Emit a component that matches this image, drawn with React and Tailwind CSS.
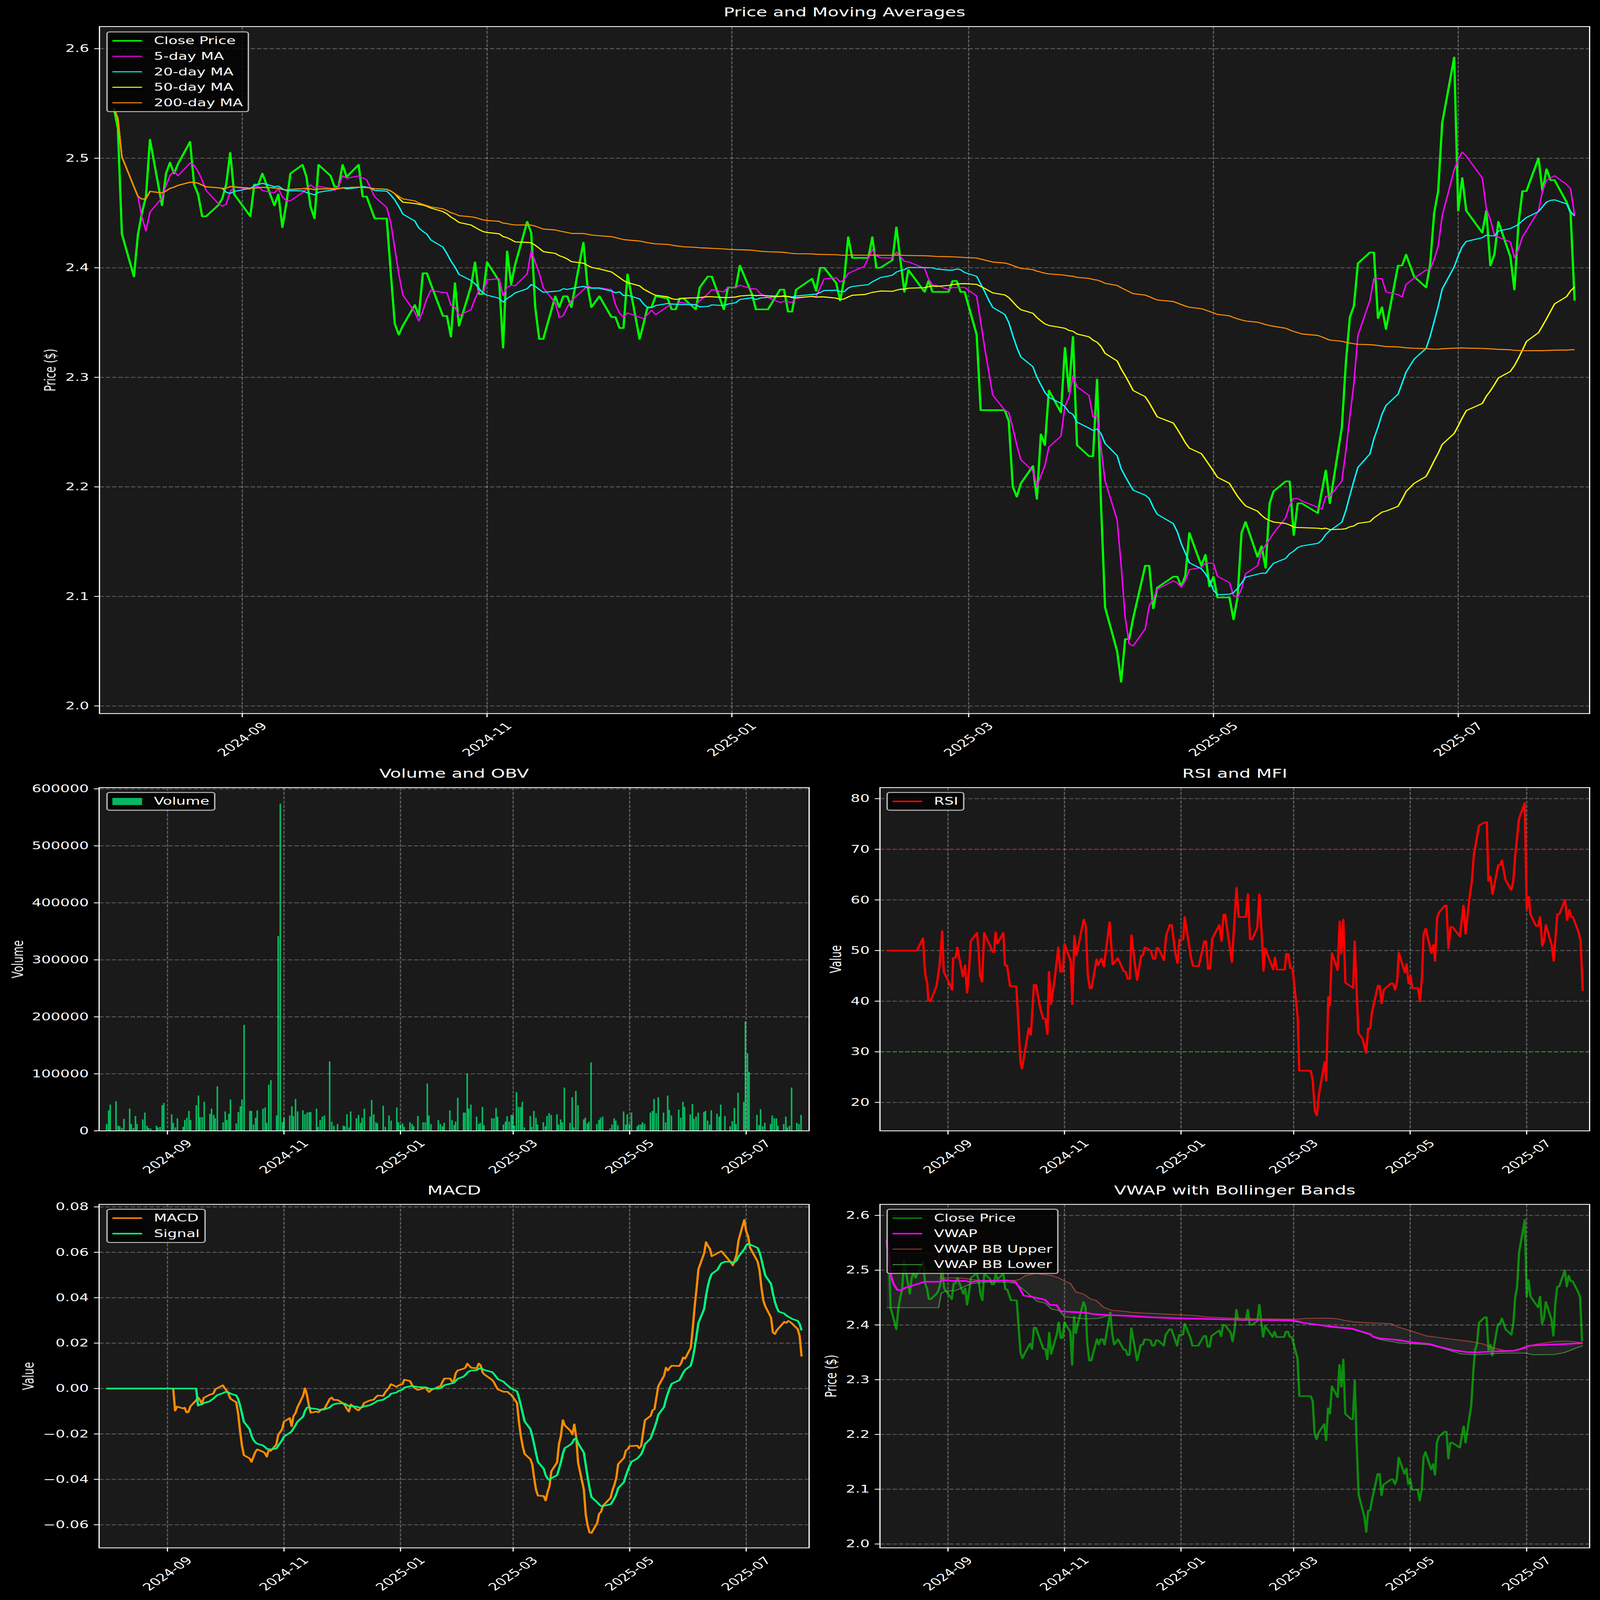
import React from 'react';

// closing prices, one per weekday from 2024-07-31 to 2025-07-30
const weekdayClose = [
  2.546, 2.527, 2.431,
  2.392, 2.43, 2.45, 2.465, 2.517,
  2.457, 2.486, 2.496, 2.486, 2.495,
  2.515, 2.476, 2.467, 2.447, 2.447,
  2.457, 2.463, 2.476, 2.505, 2.467,
  2.457, 2.447, 2.476, 2.476, 2.486,
  2.457, 2.467, 2.437, 2.459, 2.486,
  2.494, 2.483, 2.456, 2.445, 2.494,
  2.484, 2.474, 2.474, 2.494, 2.483,
  2.494, 2.465, 2.465, 2.455, 2.445,
  2.445, 2.396, 2.349, 2.339, 2.347,
  2.366, 2.356, 2.395, 2.395, 2.385,
  2.356, 2.356, 2.337, 2.386, 2.347,
  2.383, 2.405, 2.376, 2.376, 2.405,
  2.388, 2.327, 2.415, 2.385, 2.403,
  2.442, 2.432, 2.364, 2.335, 2.335,
  2.374, 2.364, 2.374, 2.374, 2.364,
  2.423, 2.384, 2.364, 2.369, 2.374,
  2.355, 2.355, 2.345, 2.345, 2.394,
  2.335, 2.349, 2.364, 2.364, 2.374,
  2.372, 2.362, 2.362, 2.372, 2.372,
  2.362, 2.382, 2.387, 2.392, 2.392,
  2.362, 2.382, 2.382, 2.382, 2.402,
  2.376, 2.362, 2.362, 2.362, 2.362,
  2.38, 2.38, 2.36, 2.36, 2.38,
  2.387, 2.39, 2.379, 2.4, 2.4,
  2.386, 2.37, 2.39, 2.428, 2.409,
  2.409, 2.409, 2.428, 2.4, 2.4,
  2.407, 2.437, 2.407, 2.378, 2.398,
  2.382, 2.378, 2.388, 2.378, 2.378,
  2.378, 2.388, 2.388, 2.378, 2.378,
  2.339, 2.27, 2.27, 2.27, 2.27,
  2.27, 2.26, 2.2, 2.191, 2.203,
  2.219, 2.189, 2.248, 2.238, 2.288,
  2.268, 2.327, 2.287, 2.337, 2.238,
  2.228, 2.228, 2.298, 2.183, 2.09,
  2.05, 2.022, 2.061, 2.061, 2.08,
  2.128, 2.128, 2.089, 2.108, 2.111,
  2.118, 2.118, 2.109, 2.119, 2.158,
  2.128, 2.138, 2.109, 2.118, 2.099,
  2.099, 2.079, 2.099, 2.158, 2.168,
  2.136, 2.146, 2.126, 2.185, 2.196,
  2.205, 2.205, 2.156, 2.185, 2.185,
  2.178, 2.176, 2.196, 2.215, 2.185,
  2.254, 2.313, 2.355, 2.365, 2.404,
  2.414, 2.414, 2.354, 2.364, 2.344,
  2.402, 2.402, 2.412, 2.397, 2.392,
  2.382, 2.403, 2.45, 2.47, 2.532,
  2.592, 2.452, 2.482, 2.452, 2.446,
  2.432, 2.452, 2.402, 2.412, 2.442,
  2.41, 2.38, 2.44, 2.47, 2.47,
  2.5, 2.47, 2.49, 2.48, 2.48,
  2.46, 2.45, 2.37,
];

// market holidays, as days relative to 2024-09-01
const holidays = [1, 88, 115, 122, 130, 141, 169, 229, 267, 291, 306];

// days relative to 2024-09-01, weekends and holidays skipped
const days = [];
const close = [];
let dayCursor = -32;
weekdayClose.forEach((price) => {
  // 2024-09-01 was a Sunday
  while ((dayCursor + 35) % 7 === 0 || (dayCursor + 35) % 7 === 6) dayCursor++;
  if (!holidays.includes(dayCursor)) {
    days.push(dayCursor);
    close.push(price);
  }
  dayCursor++;
});

const rolling = (values, size) =>
  values.map((_, i) => {
    if (i < size - 1) return null;
    const slice = values.slice(i - size + 1, i + 1);
    return slice.reduce((a, b) => a + b, 0) / size;
  });

// first `size` values grow with the data, the window is full after that
const expanding = (values, size) =>
  values.map((_, i) => {
    const slice = values.slice(Math.max(0, i - size + 1), i + 1);
    return slice.reduce((a, b) => a + b, 0) / slice.length;
  });

const ema = (values, span, minPeriods) => {
  const k = 2 / (span + 1);
  let prev = null;
  let seen = 0;
  return values.map((v) => {
    if (v === null) return null;
    prev = prev === null ? v : v * k + prev * (1 - k);
    seen++;
    return seen >= minPeriods ? prev : null;
  });
};

const ema12 = ema(close, 12, 26);
const ema26 = ema(close, 26, 26);
const macdRaw = close.map((_, i) => (ema26[i] === null ? null : ema12[i] - ema26[i]));
const signalRaw = ema(macdRaw, 9, 9);
const macd = macdRaw.map((v) => v ?? 0);
const signal = signalRaw.map((v) => v ?? 0);

const line = (values, toX, toY) =>
  values
    .map((v, i) => (v === null ? null : `${toX(days[i]).toFixed(1)},${toY(v).toFixed(1)}`))
    .filter(Boolean)
    .join(' ');

// RSI vertices, read off the plot in a 1.448 x 1.467 grid
const rsi = [
  [192,931],[250,931],[262,897],[265,975],[267,1005],[270,1020],[272,1068],[276,1072],[288,1030],[294,970],[299,877],[302,990],[312,1020],[318,1040],[320,952],[325,950],[328,922],[333,960],[339,1003],[343,972],[347,1048],[351,980],[354,905],[366,882],[369,925],[372,1000],[376,1018],[380,882],[392,920],[396,935],[399,935],[402,880],[405,912],[417,882],[420,972],[424,972],[430,1030],[442,1030],[446,1130],[450,1240],[453,1258],[458,1215],[466,1146],[470,1165],[476,1026],[480,1026],[488,1090],[494,1120],[498,1120],[502,1163],[505,990],[509,1080],[516,1010],[523,922],[527,990],[532,990],[535,912],[547,960],[550,1080],[554,890],[558,945],[572,845],[576,862],[580,1000],[584,1036],[587,1036],[597,955],[600,972],[606,953],[611,975],[622,852],[628,970],[638,952],[649,988],[653,990],[657,1010],[661,1010],[664,888],[670,960],[675,1013],[683,945],[686,945],[690,922],[701,930],[706,954],[710,954],[713,924],[716,924],[727,958],[731,890],[738,860],[742,860],[749,940],[753,966],[757,900],[764,900],[767,838],[779,950],[783,974],[794,974],[805,905],[808,905],[812,982],[816,982],[820,898],[834,860],[838,905],[842,831],[845,831],[858,963],[867,757],[871,838],[885,838],[889,775],[893,900],[897,900],[907,868],[911,775],[916,900],[919,988],[922,925],[938,984],[941,950],[945,984],[960,984],[963,940],[967,940],[971,980],[975,980],[985,1115],[988,1264],[1010,1264],[1014,1290],[1018,1375],[1022,1388],[1026,1330],[1037,1240],[1040,1292],[1044,1060],[1047,1083],[1051,938],[1062,985],[1066,850],[1069,940],[1073,845],[1077,1020],[1092,1035],[1095,905],[1102,1160],[1110,1175],[1117,1215],[1121,1147],[1125,1147],[1128,1105],[1140,1028],[1143,1028],[1147,1078],[1151,1040],[1165,1022],[1169,1022],[1173,1040],[1177,1015],[1180,937],[1192,992],[1195,968],[1199,1022],[1203,1000],[1206,1035],[1217,1035],[1221,1072],[1225,1000],[1228,885],[1232,870],[1243,938],[1247,915],[1250,960],[1254,840],[1258,825],[1269,806],[1272,806],[1276,925],[1280,866],[1284,866],[1298,892],[1305,806],[1309,885],[1316,790],[1321,740],[1325,665],[1330,625],[1335,584],[1347,575],[1350,575],[1353,738],[1357,725],[1361,775],[1365,745],[1372,694],[1376,694],[1379,681],[1386,735],[1397,763],[1401,740],[1405,665],[1412,567],[1423,522],[1427,818],[1431,782],[1434,830],[1445,863],[1449,863],[1453,838],[1457,918],[1460,905],[1464,860],[1475,915],[1479,960],[1486,830],[1490,830],[1501,790],[1505,847],[1509,818],[1513,838],[1516,838],[1527,880],[1531,905],[1535,1043],
];

// VWAP and its bands, read off the plot in a 1.448 x 1.1205 grid
const vwap = [
  [192,260],[200,390],[205,420],[212,442],[220,444],[226,436],[240,428],[265,413],[295,413],[300,406],[318,410],[345,410],[352,414],[372,410],[425,408],[440,413],[447,432],[456,463],[470,467],[497,478],[507,497],[520,498],[527,520],[545,522],[575,525],[590,530],[620,534],[660,537],[700,542],[760,546],[810,548],[880,551],[970,553],[985,556],[995,562],[1020,568],[1050,576],[1090,583],[1105,592],[1125,603],[1130,612],[1145,619],[1165,622],[1185,626],[1205,633],[1240,639],[1260,650],[1285,661],[1310,668],[1330,669],[1360,666],[1400,664],[1420,655],[1432,645],[1450,643],[1500,639],[1535,636],
];
const bbUpper = [
  [192,308],[292,308],[297,400],[310,398],[340,400],[370,408],[440,408],[450,403],[460,390],[480,383],[510,390],[525,400],[535,410],[547,420],[557,450],[572,458],[585,475],[597,482],[610,505],[625,516],[650,520],[665,524],[690,527],[730,530],[790,536],[810,541],[850,544],[900,547],[980,549],[1000,546],[1040,545],[1060,547],[1075,553],[1095,559],[1125,562],[1165,565],[1180,578],[1205,592],[1232,609],[1260,616],[1285,622],[1320,630],[1345,640],[1362,653],[1385,663],[1405,662],[1425,648],[1445,640],[1480,630],[1505,628],[1535,634],
];
const bbLower = [
  [192,507],[292,507],[297,455],[305,447],[325,445],[340,432],[355,420],[380,415],[420,414],[440,418],[460,448],[482,484],[497,490],[510,512],[525,518],[535,540],[575,548],[600,546],[620,535],[660,537],[700,542],[760,547],[810,549],[880,552],[970,554],[995,563],[1025,570],[1050,578],[1090,585],[1105,594],[1125,606],[1130,614],[1145,623],[1180,635],[1240,642],[1260,652],[1285,666],[1300,675],[1330,678],[1380,672],[1425,672],[1440,678],[1480,677],[1500,670],[1520,655],[1535,645],
];

const rsiX = (zx) => zx * 1.448 - 259;
const vwapPoints = (pts) => pts.map(([x, y]) => `${rsiX(x).toFixed(1)},${(y * 1.1205 - 148).toFixed(1)}`);

// [position, volume in thousands]
const volumeBars = [
  [203,12],[207,36],[210,46],[221,52],[225,9],[228,8],[232,5],[236,21],[247,39],[250,12],[254,5],[258,26],[261,12],[272,20],[276,32],[280,9],[283,5],[287,4],[298,9],[301,6],[305,7],[309,45],[312,49],[327,29],[330,14],[334,6],[338,22],[349,7],[352,19],[356,23],[360,35],[363,19],[374,45],[378,62],[381,24],[385,24],[389,51],[400,30],[403,39],[407,28],[410,22],[414,78],[425,15],[429,34],[432,19],[436,30],[439,55],[450,13],[454,33],[458,43],[461,55],[465,186],[476,35],[479,35],[483,11],[487,23],[490,36],[501,39],[505,41],[508,14],[512,81],[516,89],[527,27],[530,342],[534,574],[538,15],[541,23],[552,27],[556,43],[559,26],[563,56],[567,34],[577,36],[581,29],[585,32],[589,33],[592,33],[603,39],[606,7],[610,19],[614,25],[618,27],[628,122],[632,16],[636,9],[643,12],[654,9],[657,8],[661,29],[665,6],[668,34],[679,22],[683,28],[687,14],[690,23],[694,39],[705,25],[708,54],[712,29],[716,15],[719,13],[730,44],[734,7],[741,27],[745,18],[756,41],[759,15],[763,11],[767,13],[770,7],[781,15],[785,12],[788,8],[796,26],[806,15],[810,15],[814,83],[817,27],[821,12],[835,19],[839,12],[843,8],[846,14],[857,36],[861,19],[865,10],[868,16],[872,58],[883,32],[886,32],[890,100],[893,39],[897,46],[908,25],[912,12],[915,14],[919,42],[922,10],[937,22],[941,22],[945,40],[948,25],[959,11],[963,16],[966,26],[970,16],[974,28],[977,28],[980,9],[984,68],[988,42],[992,42],[995,51],[999,6],[1010,26],[1013,7],[1017,35],[1021,23],[1024,11],[1035,15],[1039,8],[1042,26],[1046,31],[1050,28],[1061,29],[1064,11],[1068,20],[1071,15],[1075,76],[1086,14],[1090,59],[1093,6],[1097,70],[1101,45],[1112,20],[1115,23],[1119,13],[1122,16],[1126,120],[1137,12],[1141,19],[1144,23],[1148,25],[1162,4],[1166,11],[1170,22],[1173,18],[1177,10],[1188,34],[1192,11],[1195,29],[1199,12],[1203,32],[1214,8],[1217,11],[1221,11],[1224,15],[1228,12],[1239,32],[1243,35],[1246,56],[1250,31],[1254,59],[1264,32],[1268,15],[1272,62],[1275,37],[1279,27],[1293,37],[1297,23],[1301,51],[1304,42],[1315,29],[1319,47],[1322,21],[1326,25],[1330,32],[1341,33],[1344,35],[1348,18],[1352,11],[1355,36],[1366,30],[1370,25],[1373,46],[1381,26],[1391,8],[1395,17],[1399,40],[1402,12],[1406,67],[1417,51],[1420,192],[1424,136],[1427,103],[1442,28],[1446,10],[1449,38],[1453,8],[1457,14],[1468,12],[1471,27],[1475,22],[1479,22],[1482,9],[1493,12],[1497,25],[1500,6],[1504,9],[1508,76],[1518,14],[1522,12],[1526,28],
];

const xTicks = [
  [0, '2024-09'],
  [61, '2024-11'],
  [122, '2025-01'],
  [181, '2025-03'],
  [242, '2025-05'],
  [303, '2025-07'],
];

const Legend = ({ items, className }) => (
  <div className={`absolute flex flex-col border-[4px] border-[#b4b4b4] rounded-[9px] bg-black/80 py-[2.5px] pl-[13px] pr-[13px] text-[41.67px] ${className}`}>
    {items.map((item) => (
      <div key={item.label} className="flex h-[63px] items-center whitespace-nowrap">
        <div className={`mr-[33px] w-[83px] ${item.swatch}`}></div>
        <span>{item.label}</span>
      </div>
    ))}
  </div>
);

const Chart = ({ ml, width, height, plotW, plotH, x0, perDay, yTicks, yLabel, yLabelX, children }) => (
  <svg width={width} height={height} className="block overflow-visible" fill="white" fontSize="41.67">
    <g transform={`translate(${ml} 2)`}>
      <rect width={plotW} height={plotH} fill="#1a1a1a" />
      {children?.under}
      {xTicks.map(([d]) => (
        <line key={d} x1={x0 + perDay * d} x2={x0 + perDay * d} y1={0} y2={plotH} stroke="white" strokeOpacity="0.3" strokeWidth="3.33" strokeDasharray="12.3 5.3" />
      ))}
      {yTicks.map(([y]) => (
        <line key={y} x1={0} x2={plotW} y1={y} y2={y} stroke="white" strokeOpacity="0.3" strokeWidth="3.33" strokeDasharray="12.3 5.3" />
      ))}
      {children?.over}
      <rect width={plotW} height={plotH} fill="none" stroke="white" strokeWidth="3.33" />

      {xTicks.map(([d, label]) => {
        const x = x0 + perDay * d;
        return (
          <g key={label}>
            <line x1={x} x2={x} y1={plotH} y2={plotH + 14.6} stroke="white" strokeWidth="3.33" />
            <text x={x} y={plotH + 105} textAnchor="middle" dominantBaseline="central" transform={`rotate(-45 ${x} ${plotH + 105})`}>
              {label}
            </text>
          </g>
        );
      })}
      {yTicks.map(([y, label]) => (
        <g key={y}>
          <line x1={-14.6} x2={0} y1={y} y2={y} stroke="white" strokeWidth="3.33" />
          <text x={-29} y={y} textAnchor="end" dominantBaseline="central">
            {label}
          </text>
        </g>
      ))}
      <text x={yLabelX - ml} y={plotH / 2} textAnchor="middle" dominantBaseline="central" transform={`rotate(-90 ${yLabelX - ml} ${plotH / 2})`}>
        {yLabel}
      </text>
    </g>
  </svg>
);

const Series = ({ points, color, width = 6.25, opacity = 1 }) => (
  <polyline points={points} fill="none" stroke={color} strokeWidth={width} strokeOpacity={opacity} strokeLinejoin="round" />
);

const PriceChart = () => {
  const toX = (d) => 399 + 11.214 * d;
  const toY = (p) => 90 + (2.6 - p) * 4455;
  return (
    <section className="flex flex-col">
      <h2 className="ml-[278px] h-[106px] w-[4164px] pt-[17px] text-center text-[50px] leading-[66px] font-normal">Price and Moving Averages</h2>
      <div className="relative">
        <Chart
          ml={278}
          width={4471}
          height={3007}
          plotW={4164}
          plotH={2794}
          x0={399}
          perDay={11.214}
          yLabel="Price ($)"
          yLabelX={141}
          yTicks={[2.6, 2.5, 2.4, 2.3, 2.2, 2.1, 2.0].map((p) => [toY(p), p.toFixed(1)])}
        >
          {{
            over: (
              <>
                <Series points={line(close, toX, toY)} color="#00ff00" />
                <Series points={line(rolling(close, 5), toX, toY)} color="#ff00ff" width={4.17} />
                <Series points={line(rolling(close, 20), toX, toY)} color="#00ffff" width={4.17} />
                <Series points={line(expanding(close, 50), toX, toY)} color="#ffff00" width={4.17} />
                <Series points={line(expanding(close, 200), toX, toY)} color="#ff8c00" width={4.17} />
              </>
            ),
          }}
        </Chart>
        <Legend
          className="left-[297px] top-[22px]"
          items={[
            { label: 'Close Price', swatch: 'h-[6px] bg-[#00ff00]' },
            { label: '5-day MA', swatch: 'h-[4px] bg-[#ff00ff]' },
            { label: '20-day MA', swatch: 'h-[4px] bg-[#00ffff]' },
            { label: '50-day MA', swatch: 'h-[4px] bg-[#ffff00]' },
            { label: '200-day MA', swatch: 'h-[4px] bg-[#ff8c00]' },
          ]}
        />
      </div>
    </section>
  );
};

const VolumeChart = () => (
  <section className="flex flex-col">
    <h2 className="ml-[277px] h-[88px] w-[1984px] text-center text-[50px] leading-[66px] font-normal">Volume and OBV</h2>
    <div className="relative">
      <Chart
        ml={277}
        width={2300}
        height={1607}
        plotW={1984}
        plotH={1396}
        x0={191}
        perDay={5.337}
        yLabel="Volume"
        yLabelX={50}
        yTicks={[0, 1, 2, 3, 4, 5, 6].map((k) => [1396 - k * 231.8, k === 0 ? '0' : `${k}00000`])}
      >
        {{
          under: volumeBars.map(([zx, k]) => (
            <rect key={zx} x={zx * 1.4668 - 279.1} y={1396 - k * 2.318} width="4.3" height={k * 2.318} fill="#00ff7f" fillOpacity="0.7" />
          )),
        }}
      </Chart>
      <Legend className="left-[297px] top-[20px]" items={[{ label: 'Volume', swatch: 'h-[29px] bg-[#05b860]' }]} />
    </div>
  </section>
);

const RsiChart = () => (
  <section className="flex flex-col">
    <h2 className="ml-[159px] h-[88px] w-[1983px] text-center text-[50px] leading-[66px] font-normal">RSI and MFI</h2>
    <div className="relative">
      <Chart
        ml={159}
        width={2171}
        height={1607}
        plotW={1983}
        plotH={1396}
        x0={190}
        perDay={5.337}
        yLabel="Value"
        yLabelX={2336 - 2300}
        yTicks={[80, 70, 60, 50, 40, 30, 20].map((v, i) => [45 + i * 205.9, String(v)])}
      >
        {{
          over: (
            <>
              <line x1={0} x2={1983} y1={250.9} y2={250.9} stroke="#ff0000" strokeOpacity="0.4" strokeWidth="3.33" strokeDasharray="12.3 5.3" />
              <line x1={0} x2={1983} y1={1074.5} y2={1074.5} stroke="#00ff00" strokeOpacity="0.35" strokeWidth="3.33" strokeDasharray="12.3 5.3" />
              <Series points={rsi.map(([x, y]) => `${rsiX(x).toFixed(1)},${(y * 1.467 - 703).toFixed(1)}`).join(' ')} color="#ff0000" />
            </>
          ),
        }}
      </Chart>
      <Legend className="left-[177px] top-[20px]" items={[{ label: 'RSI', swatch: 'h-[6px] bg-[#ff0000]' }]} />
    </div>
  </section>
);

const MacdChart = () => {
  const toX = (d) => 191 + 5.337 * d;
  const toY = (v) => 749 - v * 9235;
  return (
    <section className="flex flex-col">
      <h2 className="ml-[277px] h-[88px] w-[1984px] text-center text-[50px] leading-[66px] font-normal">MACD</h2>
      <div className="relative">
        <Chart
          ml={277}
          width={2300}
          height={1609}
          plotW={1984}
          plotH={1397}
          x0={191}
          perDay={5.337}
          yLabel="Value"
          yLabelX={80}
          yTicks={[0.08, 0.06, 0.04, 0.02, 0, -0.02, -0.04, -0.06].map((v) => [toY(v), v.toFixed(2).replace('-', '−')])}
        >
          {{
            over: (
              <>
                <Series points={line(macd, toX, toY)} color="#ff8c00" />
                <Series points={line(signal, toX, toY)} color="#00ff7f" />
              </>
            ),
          }}
        </Chart>
        <Legend
          className="left-[297px] top-[20px]"
          items={[
            { label: 'MACD', swatch: 'h-[6px] bg-[#ff8c00]' },
            { label: 'Signal', swatch: 'h-[6px] bg-[#00ff7f]' },
          ]}
        />
      </div>
    </section>
  );
};

const VwapChart = () => {
  const toX = (d) => 190 + 5.337 * d;
  const toY = (p) => 45 + (2.6 - p) * 2227;
  return (
    <section className="flex flex-col">
      <h2 className="ml-[159px] h-[88px] w-[1983px] text-center text-[50px] leading-[66px] font-normal">VWAP with Bollinger Bands</h2>
      <div className="relative">
        <Chart
          ml={159}
          width={2171}
          height={1609}
          plotW={1983}
          plotH={1397}
          x0={190}
          perDay={5.337}
          yLabel="Price ($)"
          yLabelX={2323 - 2300}
          yTicks={[2.6, 2.5, 2.4, 2.3, 2.2, 2.1, 2.0].map((p) => [toY(p), p.toFixed(1)])}
        >
          {{
            over: (
              <>
                <polygon points={[...vwapPoints(bbUpper), ...vwapPoints(bbLower).reverse()].join(' ')} fill="white" fillOpacity="0.05" />
                <Series points={line(close, toX, toY)} color="#00ff00" opacity={0.5} />
                <Series points={vwapPoints(bbUpper).join(' ')} color="#ff6050" width={3.5} opacity={0.55} />
                <Series points={vwapPoints(bbLower).join(' ')} color="#55cc55" width={3.5} opacity={0.6} />
                <Series points={vwapPoints(vwap).join(' ')} color="#ff00ff" />
              </>
            ),
          }}
        </Chart>
        <Legend
          className="left-[177px] top-[20px]"
          items={[
            { label: 'Close Price', swatch: 'h-[6px] bg-[#028002]' },
            { label: 'VWAP', swatch: 'h-[6px] bg-[#ff00ff]' },
            { label: 'VWAP BB Upper', swatch: 'h-[4px] bg-[#8a3a32]' },
            { label: 'VWAP BB Lower', swatch: 'h-[4px] bg-[#3a8a3a]' },
          ]}
        />
      </div>
    </section>
  );
};

export default function App() {
  // the window can come up smaller than the 4471x6507 page, so fit the page to it
  const sx = Math.min(1, window.innerWidth / 4471);
  const sy = Math.min(1, window.innerHeight / 6507);
  return (
    <div className="h-screen w-screen overflow-hidden bg-black">
      <div
        className="flex h-[6507px] w-[4471px] origin-top-left flex-col bg-black font-['DejaVu_Sans',sans-serif] text-white"
        style={{ transform: `scale(${sx}, ${sy})` }}
      >
        <PriceChart />
        <div className="grid grid-cols-[2300px_2171px]">
          <VolumeChart />
          <RsiChart />
        </div>
        <div className="grid grid-cols-[2300px_2171px]">
          <MacdChart />
          <VwapChart />
        </div>
      </div>
    </div>
  );
}
